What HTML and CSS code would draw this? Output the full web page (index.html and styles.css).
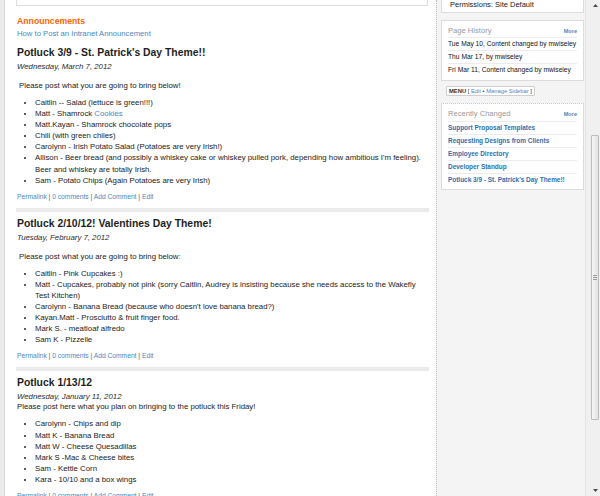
FILE: index.html
```html
<!DOCTYPE html>
<html lang="en">
<head>
<meta charset="utf-8">
<title>Announcements</title>
<link rel="stylesheet" href="styles.css">
</head>
<body>
<div class="page">
  <div class="left-strip"></div>
  <main class="main">
    <div class="content">
      <div class="top-box"></div>
      <h2 class="section-title">Announcements</h2>
      <a class="how-to" href="#">How to Post an Intranet Announcement</a>

      <article class="post first">
        <h1 class="post-title">Potluck 3/9 - St. Patrick's Day Theme!!</h1>
        <div class="post-date">Wednesday, March 7, 2012</div>
        <p class="post-intro indented">Please post what you are going to bring below!</p>
        <ul class="post-list">
          <li>Caitlin -- Salad (lettuce is green!!!)</li>
          <li>Matt - Shamrock <a href="#">Cookies</a></li>
          <li>Matt.Kayan - Shamrock chocolate pops</li>
          <li>Chili (with green chiles)</li>
          <li>Carolynn - Irish Potato Salad (Potatoes are very Irish!)</li>
          <li>Allison - Beer bread (and possibly a whiskey cake or whiskey pulled pork, depending how ambitious I'm feeling).<br>Beer and whiskey are totally Irish.</li>
          <li>Sam - Potato Chips (Again Potatoes are very Irish)</li>
        </ul>
        <div class="post-links"><a href="#">Permalink</a> | <a href="#">0 comments</a> | <a href="#">Add Comment</a> | <a href="#">Edit</a></div>
      </article>

      <div class="separator"></div>

      <article class="post">
        <h1 class="post-title">Potluck 2/10/12! Valentines Day Theme!</h1>
        <div class="post-date">Tuesday, February 7, 2012</div>
        <p class="post-intro indented">Please post what you are going to bring below:</p>
        <ul class="post-list">
          <li>Caitlin - Pink Cupcakes :)</li>
          <li>Matt - Cupcakes, probably not pink (sorry Caitlin, Audrey is insisting because she needs access to the Wakefly<br>Test Kitchen)</li>
          <li>Carolynn - Banana Bread (because who doesn't love banana bread?)</li>
          <li>Kayan.Matt - Prosciutto &amp; fruit finger food.</li>
          <li>Mark S. - meatloaf alfredo</li>
          <li>Sam K - Pizzelle</li>
        </ul>
        <div class="post-links"><a href="#">Permalink</a> | <a href="#">0 comments</a> | <a href="#">Add Comment</a> | <a href="#">Edit</a></div>
      </article>

      <div class="separator"></div>

      <article class="post">
        <h1 class="post-title">Potluck 1/13/12</h1>
        <div class="post-date">Wednesday, January 11, 2012</div>
        <p class="post-intro tight">Please post here what you plan on bringing to the potluck this Friday!</p>
        <ul class="post-list">
          <li>Carolynn - Chips and dip</li>
          <li>Matt K - Banana Bread</li>
          <li>Matt W - Cheese Quesadillas</li>
          <li>Mark S -Mac &amp; Cheese bites</li>
          <li>Sam - Kettle Corn</li>
          <li>Kara - 10/10 and a box wings</li>
        </ul>
        <div class="post-links"><a href="#">Permalink</a> | <a href="#">0 comments</a> | <a href="#">Add Comment</a> | <a href="#">Edit</a></div>
      </article>
    </div>
  </main>

  <aside class="sidebar">
    <div class="sb-box perm">Permissions: Site Default</div>

    <div class="sb-box history">
      <div class="sb-head"><span class="sb-title">Page History</span><a class="sb-more" href="#">More</a></div>
      <div class="sb-row">Tue May 10, Content changed by mwiseley</div>
      <div class="sb-row">Thu Mar 17, by mwiseley</div>
      <div class="sb-row">Fri Mar 11, Content changed by mwiseley</div>
    </div>

    <div class="menu-box"><b>MENU</b> [ <a href="#">Edit</a> &bull; <a href="#">Manage Sidebar</a> ]</div>

    <div class="sb-box recent">
      <div class="sb-head"><span class="sb-title">Recently Changed</span><a class="sb-more" href="#">More</a></div>
      <div class="sb-row"><a href="#">Support Proposal Templates</a></div>
      <div class="sb-row"><a href="#">Requesting Designs from Clients</a></div>
      <div class="sb-row"><a href="#">Employee Directory</a></div>
      <div class="sb-row"><a href="#">Developer Standup</a></div>
      <div class="sb-row"><a href="#">Potluck 3/9 - St. Patrick's Day Theme!!</a></div>
    </div>
  </aside>

  <div class="scrollbar">
    <svg class="sb-arrow" width="5" height="3" viewBox="0 0 5 3"><path d="M0 3 L2.5 0 L5 3 Z" fill="#4a4a4a"/></svg>
    <div class="sb-thumb"><div class="sb-grip"></div></div>
    <svg class="sb-arrow sb-down" width="5" height="3" viewBox="0 0 5 3"><path d="M0 0 L5 0 L2.5 3 Z" fill="#4a4a4a"/></svg>
  </div>
</div>
</body>
</html>
```

FILE: styles.css
```css
html, body {
  margin: 0;
  padding: 0;
  height: 496px;
  overflow: hidden;
  background: #fff;
  font-family: "Liberation Sans", Arial, sans-serif;
  color: #222;
}

a { text-decoration: none; }

.page {
  display: flex;
  height: 496px;
  overflow: hidden;
}

.left-strip {
  flex: none;
  width: 4px;
  background: #ebebeb;
  border-right: 1px solid #d8d8d8;
}

.main {
  flex: none;
  width: 431px;
  background: #fff;
  overflow: hidden;
}

.content {
  margin-left: 11px;
  width: 413px;
}

.top-box {
  width: 412px;
  height: 6px;
  box-sizing: border-box;
  border: 1px solid #dedede;
  border-top: none;
}

.section-title {
  margin: 10px 0 0 1px;
  font-size: 8.7px;
  line-height: 10px;
  font-weight: bold;
  color: #ff6600;
}

.how-to {
  display: block;
  margin: 3px 0 0 1px;
  font-size: 7.7px;
  line-height: 10px;
  color: #4a89bf;
}

.post {
  padding-left: 1px;
}

.post-title {
  margin: 5px 0 0;
  font-size: 10.4px;
  line-height: 14px;
  font-weight: bold;
  color: #1e1e1e;
}

.post.first .post-title {
  margin-top: 7px;
}

.post-date {
  margin-top: 2px;
  font-size: 7.8px;
  line-height: 10px;
  font-style: italic;
  color: #2a2a2a;
}

.post-intro {
  margin: 8px 0 0;
  font-size: 7.8px;
  line-height: 11px;
}

.post-intro.indented {
  padding-left: 2px;
}

.post-intro.tight {
  margin-top: 0;
  line-height: 10px;
}

.post-list {
  margin: 6px 0 0;
  padding-left: 18px;
  font-size: 7.8px;
  line-height: 11.1px;
}

.post-list a {
  color: #4a89bf;
}

.post-links {
  margin-top: 6px;
  font-size: 6.7px;
  line-height: 10px;
  color: #555;
  white-space: nowrap;
}

.post-links a {
  color: #4a89bf;
}

.separator {
  height: 4px;
  margin-top: 6px;
  background: #ebebeb;
}

/* Sidebar */
.sidebar {
  flex: none;
  width: 149px;
  box-sizing: border-box;
  padding: 0 1px 0 4px;
  background: #f4f4f4;
  border-left: 1px dotted #bdbdbd;
}

.sb-box {
  width: 143px;
  box-sizing: border-box;
  background: #fff;
  border: 1px solid #dcdcdc;
  padding: 0 6px;
}

.sb-box.perm {
  border-top: none;
  padding: 0 6px 3px 8px;
  font-size: 7.5px;
  line-height: 9px;
  color: #222;
  white-space: nowrap;
}

.sb-box.history {
  margin-top: 7px;
  padding-top: 5px;
  padding-bottom: 4px;
}

.sb-box.recent {
  margin-top: 7px;
  padding-top: 5px;
  padding-bottom: 3px;
  border-top: 1px dotted #c4c4c4;
}

.sb-head {
  display: flex;
  justify-content: space-between;
  align-items: baseline;
  height: 10px;
  line-height: 10px;
  margin-bottom: 1px;
}

.recent .sb-head {
  margin-bottom: 2px;
}

.sb-title {
  font-size: 7.6px;
  color: #999;
}

.sb-more {
  font-size: 5.6px;
  font-weight: bold;
  color: #4a89bf;
}

.sb-row {
  border-top: 1px solid #ececec;
  font-size: 6.7px;
  line-height: 12px;
  color: #111;
  white-space: nowrap;
}

.recent .sb-row a {
  font-size: 6.45px;
  font-weight: bold;
  color: #2f6fad;
}

.menu-box {
  width: fit-content;
  margin: 5px 0 0 5px;
  padding: 0 2px;
  height: 10px;
  box-sizing: border-box;
  border: 1px solid #cfcfcf;
  border-radius: 1px;
  background: #fff;
  font-size: 5.8px;
  line-height: 8px;
  color: #333;
  white-space: nowrap;
}

.menu-box a {
  color: #4a89bf;
}

/* Scrollbar */
.scrollbar {
  flex: none;
  width: 15px;
  box-sizing: border-box;
  padding-left: 5px;
  display: flex;
  flex-direction: column;
  align-items: flex-start;
  background: #f0f0f0;
  border-left: 1px solid #e3e3e3;
}

.sb-arrow {
  display: block;
  margin: 4px 0 0 2px;
}

.sb-arrow.sb-down {
  margin-top: auto;
  margin-bottom: 4px;
}

.sb-thumb {
  margin-top: 128px;
  width: 8px;
  height: 285px;
  box-sizing: border-box;
  border: 1px solid #bcbcbc;
  border-radius: 1px;
  background: linear-gradient(to right, #f6f6f6, #e2e2e2);
  display: flex;
  align-items: center;
  justify-content: center;
}

.sb-grip {
  width: 4px;
  height: 5px;
  background: repeating-linear-gradient(to bottom, #9a9a9a 0 1px, transparent 1px 2px);
}
```
